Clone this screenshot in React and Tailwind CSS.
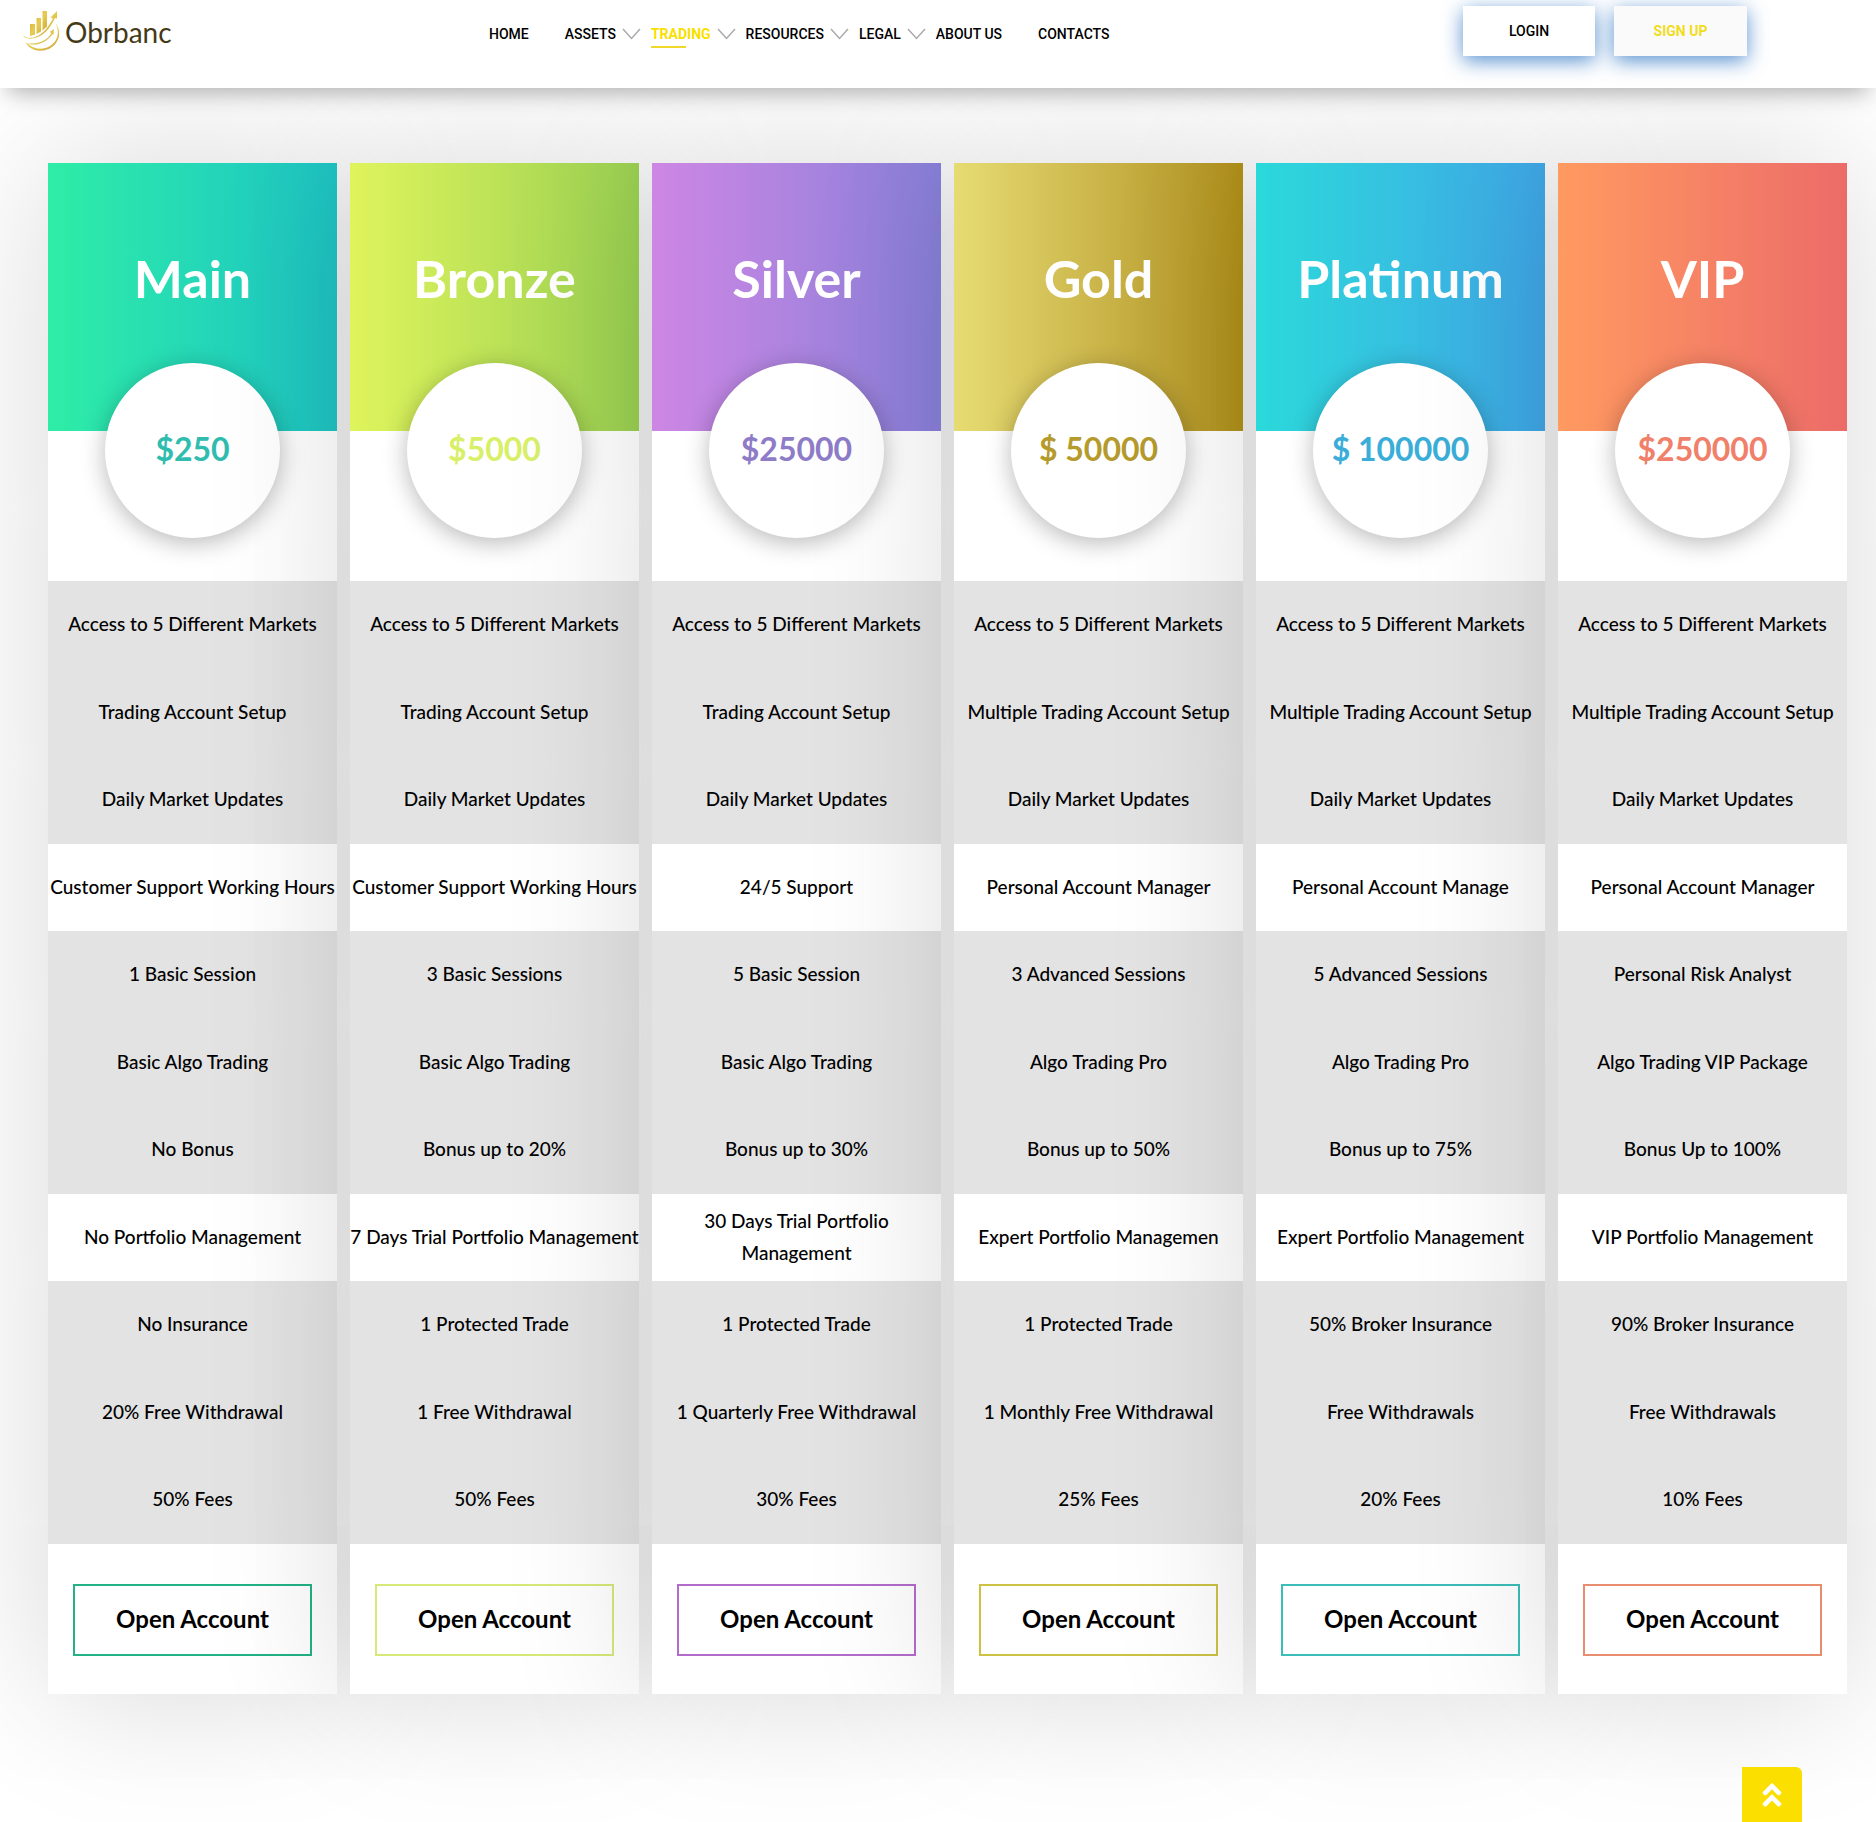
import { FaAngleDoubleUp } from "react-icons/fa";

const NAV = [
  { label: "HOME", gap: "mr-9" },
  { label: "ASSETS", menu: true },
  { label: "TRADING", menu: true, active: true },
  { label: "RESOURCES", menu: true },
  { label: "LEGAL", menu: true },
  { label: "ABOUT US", gap: "mr-9" },
  { label: "CONTACTS", gap: "" },
];

const PLANS = [
  {
    name: "Main",
    price: "$250",
    header: "from-[#2feda6] to-[#1fc4c4]",
    text: "text-[#30bdb0]",
    border: "border-[#22b285]",
    basics: ["Access to 5 Different Markets", "Trading Account Setup", "Daily Market Updates"],
    support: "Customer Support Working Hours",
    trading: ["1 Basic Session", "Basic Algo Trading", "No Bonus"],
    portfolio: "No Portfolio Management",
    fees: ["No Insurance", "20% Free Withdrawal", "50% Fees"],
  },
  {
    name: "Bronze",
    price: "$5000",
    header: "from-[#dff45c] to-[#9ad152]",
    text: "text-[#d8ef68]",
    border: "border-[#d6e878]",
    basics: ["Access to 5 Different Markets", "Trading Account Setup", "Daily Market Updates"],
    support: "Customer Support Working Hours",
    trading: ["3 Basic Sessions", "Basic Algo Trading", "Bonus up to 20%"],
    portfolio: "7 Days Trial Portfolio Management",
    fees: ["1 Protected Trade", "1 Free Withdrawal", "50% Fees"],
  },
  {
    name: "Silver",
    price: "$25000",
    header: "from-[#ce86e4] to-[#8880da]",
    text: "text-[#8e7cc9]",
    border: "border-[#b36ccb]",
    basics: ["Access to 5 Different Markets", "Trading Account Setup", "Daily Market Updates"],
    support: "24/5 Support",
    trading: ["5 Basic Session", "Basic Algo Trading", "Bonus up to 30%"],
    portfolio: "30 Days Trial Portfolio Management",
    fees: ["1 Protected Trade", "1 Quarterly Free Withdrawal", "30% Fees"],
  },
  {
    name: "Gold",
    price: "$ 50000",
    header: "from-[#e6dc72] to-[#b09018]",
    text: "text-[#b59a2c]",
    border: "border-[#cdc244]",
    basics: ["Access to 5 Different Markets", "Multiple Trading Account Setup", "Daily Market Updates"],
    support: "Personal Account Manager",
    trading: ["3 Advanced Sessions", "Algo Trading Pro", "Bonus up to 50%"],
    portfolio: "Expert Portfolio Managemen",
    fees: ["1 Protected Trade", "1 Monthly Free Withdrawal", "25% Fees"],
  },
  {
    name: "Platinum",
    price: "$ 100000",
    header: "from-[#2ad9da] to-[#3fa6e6]",
    text: "text-[#3aaed8]",
    border: "border-[#3bbdb9]",
    basics: ["Access to 5 Different Markets", "Multiple Trading Account Setup", "Daily Market Updates"],
    support: "Personal Account Manage",
    trading: ["5 Advanced Sessions", "Algo Trading Pro", "Bonus up to 75%"],
    portfolio: "Expert Portfolio Management",
    fees: ["50% Broker Insurance", "Free Withdrawals", "20% Fees"],
  },
  {
    name: "VIP",
    price: "$250000",
    header: "from-[#ff9a60] to-[#ec6b68]",
    text: "text-[#f0806a]",
    border: "border-[#e88d70]",
    basics: ["Access to 5 Different Markets", "Multiple Trading Account Setup", "Daily Market Updates"],
    support: "Personal Account Manager",
    trading: ["Personal Risk Analyst", "Algo Trading VIP Package", "Bonus Up to 100%"],
    portfolio: "VIP Portfolio Management",
    fees: ["90% Broker Insurance", "Free Withdrawals", "10% Fees"],
  },
];

function Logo() {
  return (
    <a href="#" className="flex items-center gap-1 text-[#453a17]">
      <svg width="38" height="43" viewBox="0 0 38 43" fill="none">
        <defs>
          <linearGradient id="gold" x1="0" y1="0" x2="1" y2="1">
            <stop offset="0" stopColor="#d2a93a" />
            <stop offset="0.5" stopColor="#e6cc50" />
            <stop offset="1" stopColor="#c9a13a" />
          </linearGradient>
        </defs>
        <path d="M7 14h5v10.500l-5 1.500zM13.500 8h4.500v13.500l-4.500 2.500zM19.500 1h4.500v15.500l-4.500 4z" fill="url(#gold)" />
        <path d="M.5 25c1.500 3.500 8 4 14 1 7-3.500 12-11 15.500-17.500l-2.500-1L34 1v7.500l-2-.5c-4 8-8.500 15-16 18.500-8 3.500-15.500 2.500-15.500-1.500z" fill="url(#gold)" />
        <path d="M4 33c10 2 20-2 24.500-10l-2-1 4.500-3-.5 6-1-1c-5 7.500-13 11-21.500 10.500z" fill="url(#gold)" />
        <path d="M3 33c3 .8 4 3 8 4.500 5 2 11 1.500 16-1.500 8-5 10-14 5.500-23 6 8 4.500 18-3.500 24-8 6-21 5-26-4z" fill="url(#gold)" />
      </svg>
      <span className="text-[28px] leading-8 font-normal">Obrbanc</span>
    </a>
  );
}

function NavItem({ item }) {
  return (
    <li className={`flex items-center ${item.gap || ""}`}>
      <a href="#" className={`relative ${item.active ? "font-bold text-[#fadf00]" : "text-black"}`}>
        {item.label}
        {item.active && <span className="absolute -bottom-1 left-0 h-0.5 w-[35px] bg-[#efd82a]" />}
      </a>
      {item.menu && (
        <svg className="mr-2.5 ml-1.5" width="19" height="12" viewBox="0 0 19 12" fill="none" stroke="#aaa" strokeWidth="1.5">
          <path d="M1 1l8.500 9.500L18 1" />
        </svg>
      )}
    </li>
  );
}

function Header() {
  return (
    <header className="relative z-10 flex h-[88px] items-start bg-white pl-[23px] shadow-[0_12px_22px_-8px_rgba(0,0,0,0.32)]">
      <div className="w-[466px] pt-2.5">
        <Logo />
      </div>
      <nav className="pt-6 font-['Roboto',sans-serif] text-sm font-medium">
        <ul className="flex items-center leading-5">
          {NAV.map((item) => (
            <NavItem key={item.label} item={item} />
          ))}
        </ul>
      </nav>
      <div className="mr-[129px] ml-auto flex gap-[19px] pt-1.5 font-['Roboto',sans-serif] text-sm font-medium">
        <button className="h-[50px] w-[132px] bg-white text-black shadow-[0_5px_20px_rgba(20,100,190,0.7)]">LOGIN</button>
        <button className="h-[50px] w-[133px] bg-[#fafafa] font-bold text-[#f2dc1c] shadow-[0_5px_20px_rgba(20,100,190,0.7)]">
          SIGN UP
        </button>
      </div>
    </header>
  );
}

function Row({ children }) {
  return <li className="flex flex-1 items-center justify-center pb-0.5">{children}</li>;
}

function PlanCard({ plan }) {
  return (
    <section className="bg-white text-center shadow-[0_0_150px_rgba(0,0,0,0.16)]">
      <div className={`flex h-[268px] justify-center bg-linear-to-r pt-[82px] ${plan.header}`}>
        <h2 className="text-[52px] leading-[66px] font-bold text-white">{plan.name}</h2>
      </div>
      <div className="flex h-[150px] justify-center">
        <div
          className={`-mt-[68px] flex size-[175px] items-center justify-center rounded-full bg-white pb-1 text-[32px] font-bold shadow-[0_5px_25px_rgba(0,0,0,0.28)] ${plan.text}`}
        >
          {plan.price}
        </div>
      </div>
      <ul className="text-[19px] leading-8 font-medium text-black">
        <li>
          <ul className="flex h-[263px] flex-col bg-[#e3e3e3]">
            {plan.basics.map((text) => (
              <Row key={text}>{text}</Row>
            ))}
          </ul>
        </li>
        <li className="flex h-[87px] items-center justify-center pb-0.5">{plan.support}</li>
        <li>
          <ul className="flex h-[263px] flex-col bg-[#e3e3e3]">
            {plan.trading.map((text) => (
              <Row key={text}>{text}</Row>
            ))}
          </ul>
        </li>
        <li className="flex h-[87px] items-center justify-center pb-0.5">{plan.portfolio}</li>
        <li>
          <ul className="flex h-[263px] flex-col bg-[#e3e3e3]">
            {plan.fees.map((text) => (
              <Row key={text}>{text}</Row>
            ))}
          </ul>
        </li>
      </ul>
      <div className="px-[25px] pt-10 pb-[38px]">
        <button className={`h-[72px] w-full border-2 pb-0.5 text-2xl font-bold text-black ${plan.border}`}>Open Account</button>
      </div>
    </section>
  );
}

function App() {
  return (
    <div className="relative min-h-screen overflow-hidden bg-white font-['Lato',sans-serif]">
      <Header />
      <main className="grid grid-cols-6 gap-[13px] pt-[75px] pr-[29px] pb-32 pl-12">
        {PLANS.map((plan) => (
          <PlanCard key={plan.name} plan={plan} />
        ))}
      </main>
      <button
        aria-label="Back to top"
        className="fixed right-[74px] bottom-0 flex h-[55px] w-[60px] items-center justify-center rounded-tr-md bg-[#fadf00] text-3xl text-white"
      >
        <FaAngleDoubleUp />
      </button>
    </div>
  );
}

export default App;
